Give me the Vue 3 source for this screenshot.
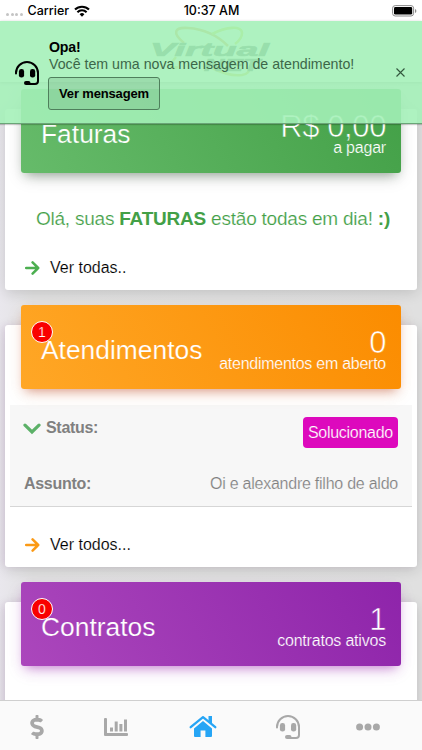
<script setup>
    import { ref } from "vue";

    const notice = ref(true);
    const active_tab = ref("home");
    const tabs = ["money", "chart", "home", "support", "menu"];
</script>
<template>
    <div class="app">
        <div class="status-bar">
            <div class="carrier">
                <span class="dots"><i v-for="n in 4" :key="n"></i></span>
                <span>Carrier</span>
                <svg viewBox="0 0 16 12" width="16" height="12">
                    <g fill="none" stroke="#000" stroke-width="2.1">
                        <path d="M1 4.6a10 10 0 0 1 14 0" />
                        <path d="M3.4 7.2a6.5 6.5 0 0 1 9.2 0" />
                    </g>
                    <path d="M5.6 9.2a3.4 3.4 0 0 1 4.8 0L8 11.8z" />
                </svg>
            </div>
            <span class="time">10:37 AM</span>
            <svg class="battery" viewBox="0 0 25 12" width="25" height="12">
                <rect x=".6" y=".6" width="21" height="10.4" rx="2.6" fill="#fff" stroke="#8b8b8b" />
                <rect x="2" y="2" width="18.2" height="7.6" rx="1.4" />
                <path d="M23 4v4q1.4-.6 1.4-2T23 4z" fill="#8b8b8b" />
            </svg>
        </div>

        <header>
            <svg class="logo" viewBox="0 0 130 60" width="130" height="60">
                <g fill="none" stroke-width="2.6">
                    <path d="M38 22C26 12 28 6 42 7c16 1 30 8 40 18" stroke="#e09a30" />
                    <path d="M66 13C80 6 96 4 96 12c0 4-3 8-7 11" stroke="#d6d630" />
                    <path d="M30 36c-7 8-8 13 2 10M66 47c10 5 22 8 30 7 6-1 8-4 6-7" stroke="#dcc830" />
                </g>
                <text x="4" y="34.5" textLength="119" lengthAdjust="spacingAndGlyphs">Virtual</text>
                <text class="net" x="58" y="49.5" textLength="56" lengthAdjust="spacingAndGlyphs">NET</text>
            </svg>
        </header>

        <main>
            <section class="card bills">
                <div class="banner green">
                    <h2>Faturas</h2>
                    <div class="summary">
                        <strong>R$ 0,00</strong>
                        <span>a pagar</span>
                    </div>
                </div>
                <p class="message">Olá, suas <b>FATURAS</b> estão todas em dia! <b>:)</b></p>
                <a class="more">
                    <svg viewBox="0 0 15 14" width="15" height="14">
                        <path d="M1.2 7h12M7.6 1.4L13.2 7l-5.6 5.6" />
                    </svg>
                    <span>Ver todas..</span>
                </a>
            </section>

            <section class="card tickets">
                <div class="banner orange">
                    <i class="badge">1</i>
                    <h2>Atendimentos</h2>
                    <div class="summary">
                        <strong>0</strong>
                        <span class="tight">atendimentos em aberto</span>
                    </div>
                </div>
                <div class="details">
                    <div class="row">
                        <svg viewBox="0 0 18 12" width="18" height="12">
                            <path d="M2 2.2L9 9l7-6.8" fill="none" stroke="#5cb168" stroke-width="3.2" stroke-linecap="round" />
                        </svg>
                        <b>Status:</b>
                        <span class="tag">Solucionado</span>
                    </div>
                    <div class="row subject">
                        <b>Assunto:</b>
                        <span class="value">Oi e alexandre filho de aldo</span>
                    </div>
                </div>
                <a class="more">
                    <svg viewBox="0 0 15 14" width="15" height="14">
                        <path d="M1.2 7h12M7.6 1.4L13.2 7l-5.6 5.6" />
                    </svg>
                    <span>Ver todos...</span>
                </a>
            </section>

            <section class="card contracts">
                <div class="banner purple">
                    <i class="badge">0</i>
                    <h2>Contratos</h2>
                    <div class="summary">
                        <strong>1</strong>
                        <span>contratos ativos</span>
                    </div>
                </div>
            </section>
        </main>

        <nav>
            <button
                v-for="tab in tabs"
                :key="tab"
                :class="[tab, { active: active_tab == tab }]"
                @click="active_tab = tab"
            >
                <svg v-if="tab == 'money'" viewBox="0 0 288 512" width="14" height="24">
                    <path d="M209.2 233.4l-108-31.6C88.7 198.2 80 186.5 80 173.5c0-16.3 13.2-29.5 29.5-29.5h66.3c12.2 0 24.2 3.7 34.2 10.5 6.1 4.1 14.3 3.1 19.5-2l34.8-34c7.1-6.9 6.1-18.4-1.8-24.5C238 74.8 207.4 64.1 176 64V16c0-8.8-7.2-16-16-16h-32c-8.8 0-16 7.2-16 16v48h-2.5C45.8 64-5.4 118.7.5 183.6c4.2 46.1 39.4 83.6 83.8 96.6l102.5 30c12.5 3.7 21.2 15.3 21.2 28.3 0 16.3-13.2 29.5-29.5 29.5h-66.3C100 368 88 364.3 78 357.5c-6.1-4.1-14.3-3.1-19.5 2l-34.8 34c-7.1 6.9-6.1 18.4 1.8 24.5 24.5 19.2 55.1 29.9 86.5 30v48c0 8.8 7.2 16 16 16h32c8.8 0 16-7.2 16-16v-48.2c46.6-.9 90.3-28.6 105.7-72.7 21.5-61.6-14.6-124.8-72.5-141.7z" />
                </svg>
                <svg v-else-if="tab == 'chart'" viewBox="0 0 24 20" width="24" height="20">
                    <path d="M0 2q0-1 1-1h1q1 0 1 1v14h20q1 0 1 1v1q0 1-1 1H1q-1 0-1-1zM6 10.5h3v4H6zM10.7 4.5h3v10h-3zM15.4 7h3v7.5h-3zM20 2.5h3v12h-3z" />
                </svg>
                <svg v-else-if="tab == 'home'" viewBox="0 0 28 23" width="28" height="23">
                    <path d="M14 6.1l9 7.4v7.5q0 1-1 1h-5.6v-6.4h-4.8V22H6q-1 0-1-1v-7.5z" />
                    <path d="M1.7 12.2L14 2.1l12.3 10.1" fill="none" stroke="currentColor" stroke-width="2.3" stroke-linecap="round" stroke-linejoin="round" />
                    <path d="M19.5 1H23v8.4l-3.5-2.8z" />
                </svg>
                <svg v-else-if="tab == 'support'" viewBox="0 0 24 24" width="24" height="24">
                    <path d="M1 12.5V12a11 11 0 0 1 22 0v8q0 3-3 3h-6" fill="none" stroke="currentColor" stroke-width="2" stroke-linecap="round" />
                    <rect x="3.9" y="8" width="5.2" height="8.6" rx="2.4" />
                    <rect x="15" y="8" width="5.2" height="8.6" rx="2.4" />
                    <rect x="9" y="20" width="6.5" height="4" rx="2" />
                </svg>
                <svg v-else viewBox="0 0 24 8" width="24" height="8">
                    <circle cx="3.6" cy="4" r="3.5" />
                    <circle cx="12" cy="4" r="3.5" />
                    <circle cx="20.4" cy="4" r="3.5" />
                </svg>
            </button>
        </nav>

        <aside v-if="notice">
            <svg class="headset" viewBox="0 0 24 24" width="24" height="24">
                <path d="M1 12.5V12a11 11 0 0 1 22 0v8q0 3-3 3h-6" fill="none" stroke="#000" stroke-width="2" stroke-linecap="round" />
                <rect x="3.9" y="8" width="5.2" height="8.6" rx="2.4" />
                <rect x="15" y="8" width="5.2" height="8.6" rx="2.4" />
                <rect x="9" y="20" width="6.5" height="4" rx="2" />
            </svg>
            <div class="body">
                <b>Opa!</b>
                <p>Você tem uma nova mensagem de atendimento!</p>
                <button>Ver mensagem</button>
            </div>
            <svg class="close" viewBox="0 0 9 9" width="9" height="9" @click="notice = false">
                <path d="M.5.5l8 8M8.5.5l-8 8" stroke="#32573d" stroke-width="1.1" />
            </svg>
        </aside>
    </div>
</template>

<style>
body {
    margin: 0;
    overflow: hidden;
}
</style>

<style scoped>
.app {
    position: relative;
    display: flex;
    flex-direction: column;
    height: 750px;
    overflow: hidden;
    background: linear-gradient(90deg, #e9e7ed, #e2e2e2 8%, #e0e0e0);
    font-family: "Liberation Sans", Arial, sans-serif;
}
.status-bar {
    display: grid;
    grid-template-columns: 1fr auto 1fr;
    align-items: center;
    flex: none;
    height: 21px;
    padding: 0 5px 0 6px;
    box-sizing: border-box;
    background: #fff;
    font: 500 12.5px/21px Inter, sans-serif;
}
.carrier {
    display: flex;
    align-items: center;
    gap: 5px;
}
.dots {
    display: flex;
    gap: 1.5px;
    padding-top: 7px;
}
.dots i {
    width: 3px;
    height: 3px;
    border-radius: 50%;
    background: #c4c4c4;
}
.battery {
    justify-self: end;
}
header {
    flex: none;
    height: 61px;
    background: #fff;
    box-shadow: 0 1px 3px rgba(0, 0, 0, 0.3);
    text-align: center;
}
.logo text {
    fill: #3c5348;
    stroke: #3c5348;
    stroke-width: 0.7px;
    font: italic bold 19px "Liberation Sans", sans-serif;
}
.logo .net {
    font-size: 16px;
}
main {
    flex: 1;
    min-height: 0;
    padding: 27px 5px 0;
}
.card {
    height: 181px;
    margin-bottom: 35px;
    border-radius: 3px;
    background: #fff;
    box-shadow: 0 3px 14px rgba(0, 0, 0, 0.14);
}
.tickets {
    height: 242px;
}
.tickets,
.contracts {
    box-shadow: 0 3px 14px rgba(0, 0, 0, 0.14), -3px 0 6px -1px rgba(180, 90, 200, 0.1);
}
.contracts {
    height: 160px;
}
.banner {
    position: relative;
    top: -20px;
    display: flex;
    justify-content: space-between;
    height: 84px;
    margin: 0 16px -20px;
    padding: 0 15px 0 20px;
    box-sizing: border-box;
    border-radius: 3px;
    color: #fff;
}
.green {
    background: linear-gradient(60deg, #66bb6a, #43a047);
    box-shadow: 0 6px 16px -3px rgba(0, 0, 0, 0.22), 0 6px 10px -5px rgba(60, 110, 65, 0.4);
}
.orange {
    background: linear-gradient(60deg, #ffa726, #fb8c00);
    box-shadow: 0 6px 16px -3px rgba(230, 120, 50, 0.22), 0 6px 10px -5px rgba(170, 60, 40, 0.5);
}
.purple {
    background: linear-gradient(60deg, #ab47bc, #8e24aa);
    box-shadow: 0 6px 16px -3px rgba(156, 39, 176, 0.22), 0 6px 10px -5px rgba(156, 39, 176, 0.5);
}
h2 {
    margin: 30px 0 0;
    font-size: 26.4px;
    font-weight: 400;
    line-height: 30px;
    -webkit-text-stroke: 0.2px #56ae5a;
}
.orange h2 {
    -webkit-text-stroke-color: #ffa01c;
}
.purple h2 {
    -webkit-text-stroke-color: #a23bb5;
}
.summary {
    display: flex;
    flex-direction: column;
    align-items: flex-end;
    padding-top: 21px;
    -webkit-text-stroke: 0.2px #48a34c;
}
.orange .summary {
    -webkit-text-stroke-color: #fc9008;
}
.purple .summary {
    -webkit-text-stroke-color: #9329ae;
}
.summary strong {
    font-size: 31px;
    font-weight: 400;
    line-height: 34px;
    letter-spacing: -0.4px;
    -webkit-text-stroke-width: 0.6px;
}
.summary span {
    font-size: 16px;
    line-height: 18px;
    margin-top: -5px;
    letter-spacing: -0.2px;
}
.summary .tight {
    letter-spacing: -0.26px;
}
.badge {
    position: absolute;
    left: 10px;
    top: 16px;
    width: 20px;
    height: 20px;
    border: 1px solid #fff;
    border-radius: 50%;
    background: #f90000;
    font-size: 14px;
    font-style: normal;
    line-height: 20px;
    text-align: center;
    -webkit-text-stroke: 0.25px #f90000;
}
.message {
    margin: 35px 0 0 4px;
    color: #43a047;
    font-size: 19px;
    line-height: 22px;
    letter-spacing: -0.22px;
    text-align: center;
    white-space: nowrap;
    -webkit-text-stroke: 0.2px #fff;
}
.message b {
    -webkit-text-stroke: 0;
}
.more {
    display: flex;
    align-items: center;
    gap: 10px;
    margin: 28px 20px 0;
    font-size: 16px;
    line-height: 20px;
    -webkit-text-stroke: 0.15px #fff;
}
.more svg {
    fill: none;
    stroke: #4caf50;
    stroke-width: 2.5px;
    stroke-linecap: round;
    stroke-linejoin: round;
}
.tickets .more svg {
    stroke: #fb9a16;
}
.details {
    height: 102px;
    margin: 16px 5px 0;
    padding: 12px 14px 0;
    box-sizing: border-box;
    border-bottom: 1px solid #d6d6d6;
    background: #f7f7f7;
    color: #808080;
    font-size: 16px;
}
.row {
    display: flex;
    align-items: flex-start;
    line-height: 22px;
}
.row b {
    letter-spacing: -0.3px;
}
.row svg {
    margin: 6px 5px 0 -1px;
}
.row .tag {
    margin-left: auto;
    padding: 0 5px;
    border-radius: 4px;
    background: #dd09bd;
    color: #fff;
    line-height: 31px;
    letter-spacing: -0.27px;
    -webkit-text-stroke: 0.2px #dd09bd;
}
.subject {
    margin-top: 25px;
}
.value {
    margin-left: auto;
    letter-spacing: -0.24px;
    -webkit-text-stroke: 0.2px #f7f7f7;
}
nav {
    position: relative;
    display: flex;
    flex: none;
    justify-content: space-between;
    height: 50px;
    padding: 2px 42px 0 30px;
    box-sizing: border-box;
    border-top: 1px solid #cfcfcf;
    background: #fafafa;
}
nav button {
    display: flex;
    align-items: center;
    padding: 0;
    border: 0;
    background: none;
    color: #a8a8a8;
}
nav .chart,
nav .home {
    margin-left: 1px;
}
nav .support {
    margin-right: -3px;
}
nav button.active {
    color: #26a5f5;
}
nav svg {
    fill: currentColor;
}
aside {
    position: absolute;
    top: 21px;
    left: 0;
    display: flex;
    width: 100%;
    height: 103px;
    padding: 18px 17px 0 15px;
    box-sizing: border-box;
    border-bottom: 1px solid #6aa577;
    background: rgba(164, 240, 184, 0.89);
    box-shadow: 0 1px 1px rgba(0, 0, 0, 0.2);
}
.headset {
    margin-top: 22px;
}
.body {
    flex: 1;
    margin-left: 10px;
    font-size: 14.2px;
    line-height: 17px;
}
.body b {
    letter-spacing: -0.2px;
}
.body p {
    margin: 0;
    color: #3c6749;
    white-space: nowrap;
}
.body button {
    display: block;
    width: 112px;
    height: 33px;
    margin: 4px 0 0 -1px;
    padding: 0;
    border: 1px solid #4f7f5c;
    border-radius: 3px;
    background: rgba(70, 120, 85, 0.17);
    font: bold 13px "Liberation Sans", Arial, sans-serif;
    letter-spacing: -0.15px;
}
.close {
    margin-top: 29px;
}
</style>
